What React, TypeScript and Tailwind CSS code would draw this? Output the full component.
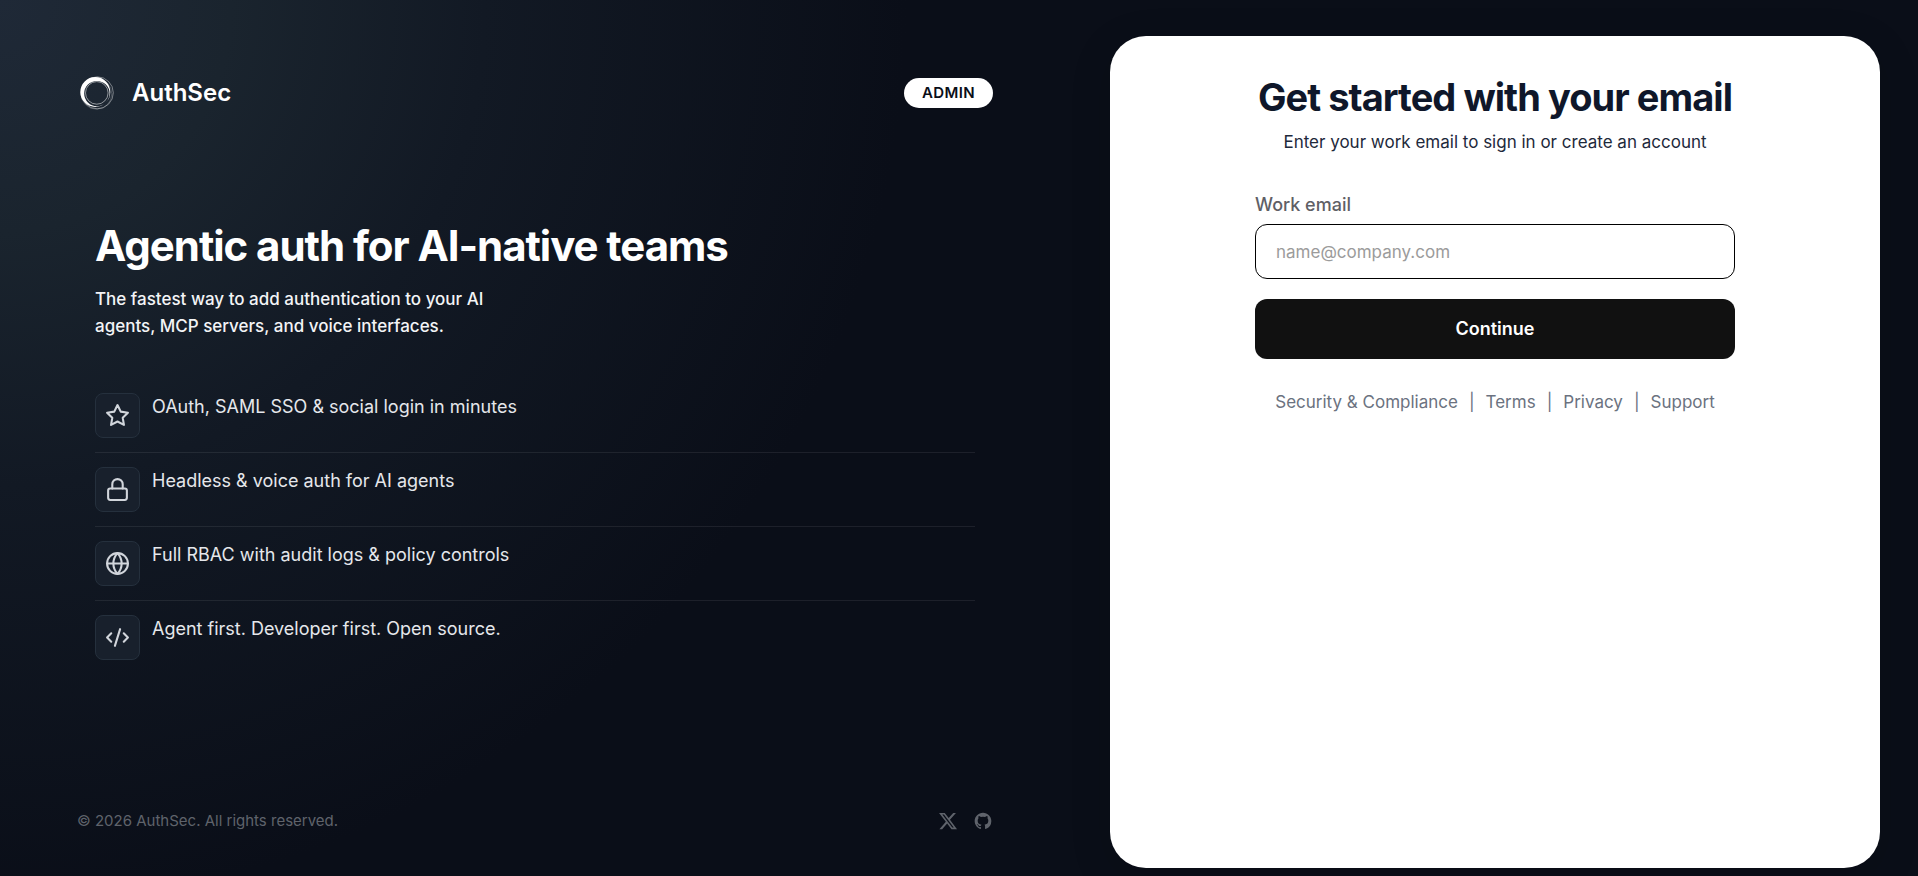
import { useState } from "react";
import type { ReactNode } from "react";

function LineIcon({ children }: { children: ReactNode }) {
  return (
    <svg viewBox="0 0 24 24" className="size-[25px]" fill="none" stroke="currentColor" strokeWidth="2" strokeLinecap="round" strokeLinejoin="round" aria-hidden="true">
      {children}
    </svg>
  );
}

const features: { icon: ReactNode; text: string }[] = [
  {
    icon: <path d="m12 2 3.09 6.26L22 9.27l-5 4.87 1.18 6.88L12 17.77l-6.18 3.25L7 14.14 2 9.27l6.91-1.01L12 2Z" />,
    text: "OAuth, SAML SSO & social login in minutes",
  },
  {
    icon: (
      <>
        <rect x="3" y="11" width="18" height="11" rx="2" />
        <path d="M7 11V7a5 5 0 0 1 10 0v4" />
      </>
    ),
    text: "Headless & voice auth for AI agents",
  },
  {
    icon: (
      <>
        <circle cx="12" cy="12" r="10" />
        <path d="M2 12h20M12 2a15.3 15.3 0 0 1 4 10 15.3 15.3 0 0 1-4 10 15.3 15.3 0 0 1-4-10 15.3 15.3 0 0 1 4-10Z" />
      </>
    ),
    text: "Full RBAC with audit logs & policy controls",
  },
  {
    icon: <path d="m18 16 4-4-4-4M6 8l-4 4 4 4M14.5 4l-5 16" />,
    text: "Agent first. Developer first. Open source.",
  },
];

const links = ["Security & Compliance", "Terms", "Privacy", "Support"];

function Logo() {
  return (
    <svg viewBox="0 0 40 40" className="size-10" fill="none" stroke="#fff" aria-hidden="true">
      <path fill="#fff" stroke="none" fillRule="evenodd" d="M18.3 4a15 15 0 1 0 0 30 15 15 0 0 0 0-30Zm1.6 3.9a12.7 12.7 0 1 1 0 25.4 12.7 12.7 0 0 1 0-25.4Z" />
      <circle cx="20.3" cy="19.8" r="16" strokeWidth="0.7" opacity="0.6" />
      <circle cx="19.4" cy="20.8" r="15.4" strokeWidth="0.5" opacity="0.4" />
      <circle cx="19.8" cy="19.9" r="11.3" strokeWidth="0.8" opacity="0.65" />
    </svg>
  );
}

export default function App() {
  const [email, setEmail] = useState("");
  return (
    <div className="grid min-h-screen grid-cols-1 bg-[#0a0e18] bg-[radial-gradient(circle_at_top_left,#1f2937_0%,#1a242e_11%,#121924_23%,#0a0e18_43%)] font-['Inter',sans-serif] text-white lg:grid-cols-[1070fr_848fr]">
      <section className="flex flex-col justify-between px-[77px] pt-[73px] pb-[43px]">
        <header className="flex items-center justify-between">
          <div className="flex items-center gap-[15px]">
            <Logo />
            <span className="text-2xl font-semibold">AuthSec</span>
          </div>
          <span className="flex h-[30px] items-center rounded-full bg-white px-[18px] text-[15px] font-semibold tracking-wide text-[#0a0e18]">ADMIN</span>
        </header>
        <main className="px-[18px] pb-[27px]">
          <h1 className="text-[42px] leading-[50px] font-bold tracking-tight">Agentic auth for AI-native teams</h1>
          <p className="mt-[15px] max-w-[420px] text-[17px] leading-[27px] font-medium text-[#f3f4f6]">
            The fastest way to add authentication to your AI agents, MCP servers, and voice interfaces.
          </p>
          <ul className="mt-[39px]">
            {features.map((f) => (
              <li key={f.text} className="flex gap-3 border-b border-white/8 py-[14px] last:border-b-0">
                <span className="flex size-[45px] shrink-0 items-center justify-center rounded-lg border border-[#25303d] bg-[#18202c] text-[#d1d5db]">
                  <LineIcon>{f.icon}</LineIcon>
                </span>
                <span className="text-lg leading-[27px] text-[#e5e7eb]">{f.text}</span>
              </li>
            ))}
          </ul>
        </main>
        <footer className="flex items-center justify-between text-[#5f636b]">
          <p className="text-[15px] leading-6">© 2026 AuthSec. All rights reserved.</p>
          <div className="flex gap-[15px]">
            <a href="#x" aria-label="X">
              <svg viewBox="0 0 24 24" className="size-5" fill="currentColor" aria-hidden="true">
                <path d="M18.244 2.25h3.308l-7.227 8.26 8.502 11.24H16.17l-5.214-6.817L4.99 21.75H1.68l7.73-8.835L1.254 2.25H8.08l4.713 6.231zm-1.161 17.52h1.833L7.084 4.126H5.117z" />
              </svg>
            </a>
            <a href="#github" aria-label="GitHub">
              <svg viewBox="0 0 24 24" className="size-5" fill="currentColor" aria-hidden="true">
                <path d="M12 2C6.477 2 2 6.484 2 12.017c0 4.425 2.865 8.18 6.839 9.504.5.092.682-.217.682-.483 0-.237-.008-.868-.013-1.703-2.782.605-3.369-1.343-3.369-1.343-.454-1.158-1.11-1.466-1.11-1.466-.908-.62.069-.608.069-.608 1.003.07 1.531 1.032 1.531 1.032.892 1.53 2.341 1.088 2.91.832.092-.647.35-1.088.636-1.338-2.22-.253-4.555-1.113-4.555-4.951 0-1.093.39-1.988 1.029-2.688-.103-.253-.446-1.272.098-2.65 0 0 .84-.27 2.75 1.026A9.564 9.564 0 0 1 12 6.844a9.59 9.59 0 0 1 2.504.337c1.909-1.296 2.747-1.027 2.747-1.027.546 1.379.202 2.398.1 2.651.64.7 1.028 1.595 1.028 2.688 0 3.848-2.339 4.695-4.566 4.943.359.309.678.92.678 1.855 0 1.338-.012 2.419-.012 2.747 0 .268.18.58.688.482A10.02 10.02 0 0 0 22 12.017C22 6.484 17.522 2 12 2Z" />
              </svg>
            </a>
          </div>
        </footer>
      </section>
      <section className="flex pt-9 pr-[38px] pb-2 pl-10">
        <div className="flex flex-1 flex-col items-center rounded-[36px] bg-white px-6 pt-9 shadow-[0_10px_40px_rgba(0,0,0,0.15)]">
          <h2 className="text-[38px] leading-[50px] font-bold tracking-tight text-[#0f172a]">Get started with your email</h2>
          <p className="mt-2 text-[17px] leading-6 text-[#1e293b]">Enter your work email to sign in or create an account</p>
          <form className="mt-[37px] flex w-full max-w-[480px] flex-col" onSubmit={(e) => e.preventDefault()}>
            <label htmlFor="email" className="text-lg leading-7 font-medium text-[#5f5f66]">Work email</label>
            <input
              id="email"
              type="email"
              value={email}
              onChange={(e) => setEmail(e.target.value)}
              placeholder="name@company.com"
              className="mt-[5px] h-[55px] rounded-xl border border-black bg-white px-5 text-[17px] text-black outline-none placeholder:text-[#9b9b9b]"
            />
            <button type="submit" className="mt-5 h-[60px] rounded-xl bg-[#111] text-lg font-semibold text-white">Continue</button>
          </form>
          <nav className="mt-[29px] flex items-center gap-[11px] text-[17px] leading-7 text-[#6b7280]">
            {links.map((l, i) => (
              <span key={l} className="flex items-center gap-[11px]">
                {i > 0 && <span aria-hidden="true">|</span>}
                <a href="#legal">{l}</a>
              </span>
            ))}
          </nav>
        </div>
      </section>
    </div>
  );
}
